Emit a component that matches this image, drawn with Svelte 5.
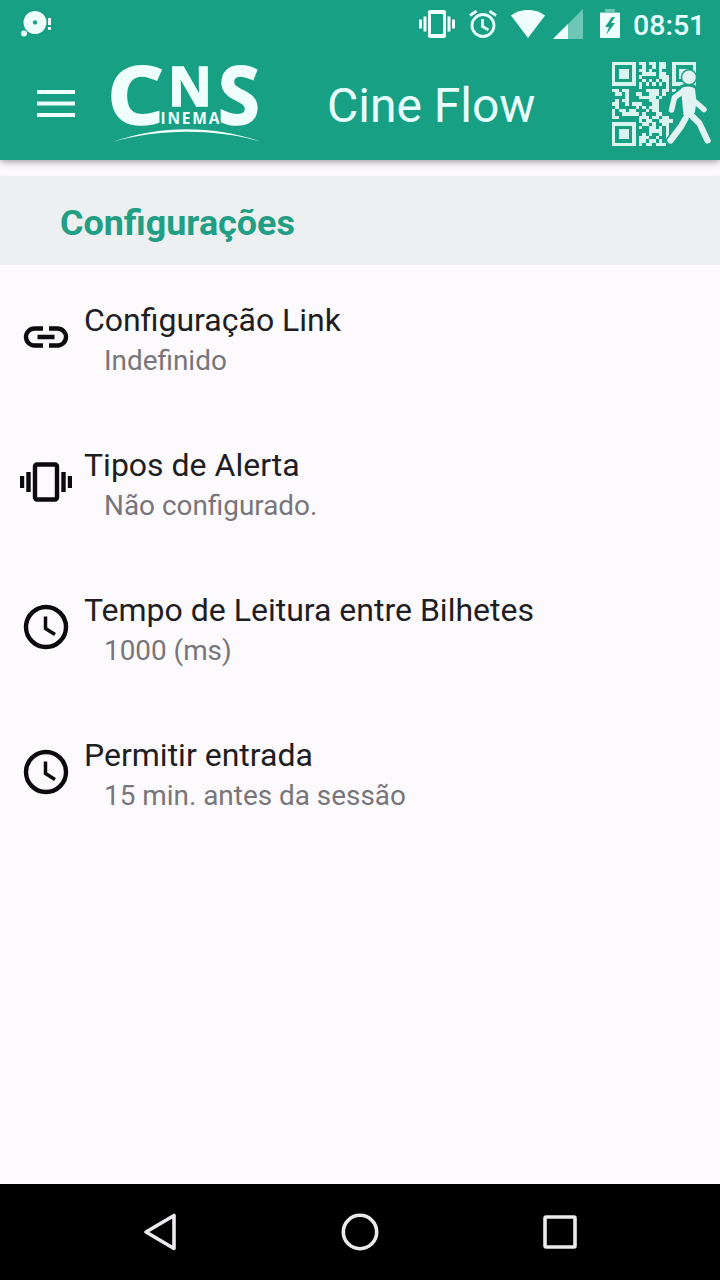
<script lang="ts">
	type Setting = { icon: 'link' | 'vibration' | 'clock'; title: string; value: string };

	const settings: Setting[] = [
		{ icon: 'link', title: 'Configuração Link', value: 'Indefinido' },
		{ icon: 'vibration', title: 'Tipos de Alerta', value: 'Não configurado.' },
		{ icon: 'clock', title: 'Tempo de Leitura entre Bilhetes', value: '1000 (ms)' },
		{ icon: 'clock', title: 'Permitir entrada', value: '15 min. antes da sessão' }
	];

	// QR modules, 25 x 25
	const qrRows = [
		'#######.##.##.##..#######',
		'#.....#..#..#.##..#.....#',
		'#.###.#.##.#..#...#.###.#',
		'#.###.#..####.##..#.###.#',
		'#.###.#.#.....###.#.###.#',
		'#.....#..#.#.#.##.#.....#',
		'#######.#.#.#.#.#.#######',
		'........#.......#........',
		'##.##.....####.##.#......',
		'.##.#..##..###.#.........',
		'....#...#####.#..........',
		'.#.##......###...........',
		'##..#.###...##...........',
		'.#.....#.#.###...........',
		'#.##.##...#.##...........',
		'#..#####.#...##..........',
		'##......###.##.##........',
		'........#.##..####.......',
		'#######..##.#..##........',
		'#.....#.#..##.#.#........',
		'#.###.#....####.#........',
		'#.###.#..#.#..#.#........',
		'#.###.#.###..#..#........',
		'#.....#.##.##.#.#........',
		'#######.#.##.###.........'
	];
	const modules = qrRows.flatMap((row, y) =>
		[...row].flatMap((cell, x) => (cell === '#' ? [{ x, y }] : []))
	);
</script>

<div class="screen">
	<header>
		<div class="status-bar">
			<svg class="notification" width="34" height="28" viewBox="0 0 34 28">
				<circle cx="4" cy="22.500" r="3" />
				<path
					fill-rule="evenodd"
					d="M15 0a11.500 11.500 0 1 0 .01 0ZM15 9.300a2.200 2.200 0 1 1-.01 0Z"
				/>
				<path d="M28 7h3v7h-3zM28 16h3v3h-3z" />
			</svg>
			<div class="status-icons">
				<svg width="36" height="28" viewBox="0 0 36 28">
					<path
						fill-rule="evenodd"
						d="M11 0h14a2 2 0 0 1 2 2v24a2 2 0 0 1-2 2H11a2 2 0 0 1-2-2V2a2 2 0 0 1 2-2ZM12 4v20h12V4Z"
					/>
					<path d="M4.500 6.500h3v15h-3zM0 9.500h3v9H0zM28.500 6.500h3v15h-3zM33 9.500h3v9h-3z" />
				</svg>
				<svg class="alarm" width="28" height="28" viewBox="0 0 28 28">
					<circle cx="14" cy="15.500" r="11" />
					<path d="M1 5.500 7.500 1M27 5.500 20.500 1M13.500 9v7.500l6 3.500" />
				</svg>
				<svg class="wifi" width="34" height="28" viewBox="0 0 34 28">
					<path d="M0 5.500C10-1.700 24-1.700 34 5.500L17 28Z" />
				</svg>
				<svg class="signal" width="30" height="30" viewBox="0 0 30 30">
					<path opacity=".4" d="M30 0v30H0Z" />
					<path d="M15 15v15H0Z" />
				</svg>
				<svg class="battery" width="20" height="30" viewBox="0 0 20 30">
					<path opacity=".4" d="M5 0h10v3h5v2H0V3h5Z" />
					<path
						fill-rule="evenodd"
						d="M0 4h20v24a1 1 0 0 1-1 1H1a1 1 0 0 1-1-1ZM12 8l-7 10h4l-3 8 9-12h-4l4-6Z"
					/>
				</svg>
				<span class="time">08:51</span>
			</div>
		</div>
		<div class="app-bar">
			<svg class="menu" width="38" height="28" viewBox="0 0 38 28">
				<path d="M0 0h38v4H0zM0 11.500h38v4H0zM0 23h38v4H0z" />
			</svg>
			<svg class="logo" width="152" height="80" viewBox="0 0 152 80">
				<g class="initials">
					<text transform="translate(-4 60) scale(1.120 1)" font-size="80">C</text>
					<text transform="translate(57 41.500) scale(1 .98)" font-size="54">N</text>
					<text transform="translate(107 60) scale(.95 1)" font-size="80">S</text>
				</g>
				<text x="49.500" y="59.500" font-size="15.500" textLength="59" lengthAdjust="spacing">INEMA</text>
				<path d="M1.500 78C48 61 103 61 149 77.500 103 64.500 48 64.500 1.500 78Z" />
			</svg>
			<h1>Cine Flow</h1>
			<svg class="qr" width="100" height="88" viewBox="0 0 100 88">
				<g transform="translate(0 2) scale(3.360)" shape-rendering="crispEdges">
					{#each modules as { x, y }}
						<rect {x} {y} width="1.020" height="1.020" />
					{/each}
				</g>
				{#each ['walker halo', 'walker'] as layer}
					<g class={layer}>
						<circle cx="77" cy="17.300" r="6.800" />
						<path d="M59.500 50 62.500 37.500 72 30.500M84 42.500l8 7" stroke-width="5.500" />
						<path d="M77 53l10.500 10.500L95.500 80.500M73.500 58.500 69 66.500 58.500 80.500" />
						<path class="torso" d="M71 29.500q5-2 10 0l1.500 12-1.500 10-7.500 3Z" stroke-width="4" />
					</g>
				{/each}
			</svg>
		</div>
	</header>

	<main>
		<h2>Configurações</h2>
		<ul>
			{#each settings as setting}
				<li>
					<svg class="icon" width="52" height="52" viewBox="0 0 52 52">
						{#if setting.icon === 'link'}
							<path d="M23 17.500H14.500a8.500 8.500 0 0 0 0 17H23M29 17.500h8.500a8.500 8.500 0 0 1 0 17H29M17.500 26h17" />
						{:else if setting.icon === 'vibration'}
							<rect x="15" y="8.500" width="22" height="35" rx="2" />
							<path d="M2 20v12M8.500 16v20M43.500 16v20M50 20v12" />
						{:else}
							<circle cx="26" cy="26" r="20" />
							<path class="hands" d="M25.500 15.500v12l9.500 6" />
						{/if}
					</svg>
					<div class="text">
						<span class="title">{setting.title}</span>
						<span class="value">{setting.value}</span>
					</div>
				</li>
			{/each}
		</ul>
	</main>

	<nav>
		<svg width="40" height="40" viewBox="0 0 40 40">
			<path d="M34 3.500v33L6 20Z" />
		</svg>
		<svg width="40" height="40" viewBox="0 0 40 40">
			<circle cx="20" cy="20" r="16.700" />
		</svg>
		<svg width="40" height="40" viewBox="0 0 40 40">
			<rect x="5" y="5" width="30" height="30" rx="1" />
		</svg>
	</nav>
</div>

<style>
	:global(body) {
		margin: 0;
	}

	.screen {
		display: flex;
		flex-direction: column;
		width: 720px;
		height: 1280px;
		overflow: hidden;
		background: #fcfafd;
		font-family: Roboto, sans-serif;
	}

	svg {
		display: block;
		flex: none;
	}

	header {
		height: 160px;
		background: #18a085;
		color: #e8ffff;
		fill: #effffc;
		box-shadow: 0 1px 8px rgba(0, 0, 0, 0.45);
	}

	.status-bar {
		display: flex;
		justify-content: space-between;
		height: 48px;
		padding: 0 16px 0 20px;
	}

	.notification {
		margin-top: 11px;
	}

	.status-icons {
		display: flex;
		align-items: flex-start;
		padding-top: 10px;
	}

	.alarm {
		margin-left: 14px;
		fill: none;
		stroke: #e8fffb;
		stroke-width: 2.8;
	}

	.wifi {
		margin-left: 14px;
	}

	.signal {
		margin: -1px 0 0 8px;
	}

	.battery {
		margin: -1px 13px 0 17px;
	}

	.time {
		width: 71px;
		font-size: 28.5px;
		font-weight: 500;
		line-height: 31px;
		white-space: nowrap;
	}

	.app-bar {
		display: flex;
		align-items: flex-start;
		height: 112px;
		padding-left: 37px;
	}

	.menu {
		margin-top: 42px;
	}

	.logo {
		margin: 16px 0 0 36px;
		overflow: visible;
		font-family: 'Open Sans', sans-serif;
		font-weight: 700;
	}

	.initials {
		stroke: #effffc;
		stroke-width: 1.6;
	}

	h1 {
		width: 282px;
		margin: 30px 0 0 64px;
		font-size: 48px;
		font-weight: 400;
		line-height: 56px;
	}

	.qr {
		margin: 12px 0 0 3px;
		fill: #d9f3ef;
	}

	.walker {
		fill: #e3f3f2;
		stroke: #e3f3f2;
		stroke-width: 6.3;
		stroke-linecap: round;
		stroke-linejoin: round;
	}

	.walker circle {
		stroke: none;
	}

	.walker path {
		fill: none;
	}

	.walker .torso {
		fill: #e3f3f2;
	}

	.walker.halo {
		fill: #18a085;
		stroke: #18a085;
	}

	.walker.halo circle {
		stroke: #18a085;
		stroke-width: 3;
	}

	.walker.halo path {
		stroke-width: 9.5;
	}

	main {
		flex: 1;
		padding-top: 16px;
	}

	h2 {
		height: 89px;
		margin: 0;
		padding-left: 60px;
		background: #ecf0f1;
		color: #219e83;
		font-size: 35.9px;
		font-weight: 700;
		line-height: 95px;
	}

	ul {
		margin: 0;
		padding: 35px 0 0;
		list-style: none;
	}

	li {
		display: flex;
		gap: 12px;
		height: 145px;
		padding-left: 20px;
	}

	.icon {
		margin-top: 11px;
		fill: none;
		stroke: #0b0a0c;
		stroke-width: 4.4;
	}

	.icon .hands {
		stroke-width: 3.5;
	}

	.text {
		display: flex;
		flex-direction: column;
	}

	.title {
		color: #201e22;
		font-size: 32px;
		line-height: 40px;
	}

	.value {
		padding-left: 20px;
		color: #78767a;
		font-size: 27.9px;
		line-height: 42px;
	}

	nav {
		display: flex;
		justify-content: center;
		align-items: center;
		gap: 160px;
		height: 96px;
		background: #000;
		fill: none;
		stroke: #eceaec;
		stroke-width: 3.6;
		stroke-linejoin: round;
	}
</style>
